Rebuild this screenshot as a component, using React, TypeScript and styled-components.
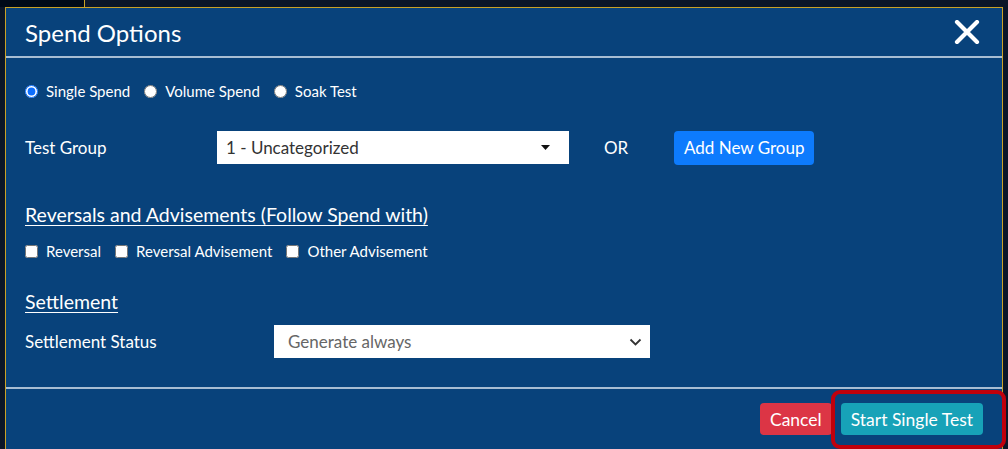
import styled, { createGlobalStyle } from "styled-components";

const GlobalStyle = createGlobalStyle`
  html, body {
    margin: 0;
    padding: 0;
    background: #0b1628;
    font-family: Lato, "Open Sans", Arial, sans-serif;
    overflow: hidden;
  }
`;

const RADIOS = ["Single Spend", "Volume Spend", "Soak Test"];
const CHECKS = ["Reversal", "Reversal Advisement", "Other Advisement"];

function CaretIcon() {
  return (
    <svg width="9" height="5" viewBox="0 0 9 5">
      <path d="M0 0 H9 L4.5 5 Z" fill="#111" />
    </svg>
  );
}

function ChevronIcon() {
  return (
    <svg width="13" height="8" viewBox="0 0 13 8">
      <path d="M1.5 1.5 L6.5 6.5 L11.5 1.5" fill="none" stroke="#333" strokeWidth="1.8" />
    </svg>
  );
}

function CloseIcon() {
  return (
    <svg width="26" height="24" viewBox="0 0 26 24">
      <path d="M3 2 L23 22 M23 2 L3 22" stroke="#fff" strokeWidth="4.2" strokeLinecap="round" />
    </svg>
  );
}

export default function App() {
  return (
    <>
      <GlobalStyle />
      <Page>
        <TopStrip>
          <BackdropTab />
        </TopStrip>
        <Modal>
          <Header>
            <Title>Spend Options</Title>
            <CloseButton aria-label="close">
              <CloseIcon />
            </CloseButton>
          </Header>
          <Body>
            <OptionRow>
              {RADIOS.map((label, i) => (
                <Option key={label}>
                  <Radio type="radio" name="spend" defaultChecked={i === 0} />
                  {label}
                </Option>
              ))}
            </OptionRow>

            <FieldRow $gap={29}>
              <Label $width={192}>Test Group</Label>
              <SelectBox $width={352}>
                <span>1 - Uncategorized</span>
                <CaretIcon />
              </SelectBox>
              <OrText>OR</OrText>
              <PrimaryButton>Add New Group</PrimaryButton>
            </FieldRow>

            <SectionTitle $gap={38}>Reversals and Advisements (Follow Spend with)</SectionTitle>
            <OptionRow $gap={14}>
              {CHECKS.map((label) => (
                <Option key={label}>
                  <Check type="checkbox" />
                  {label}
                </Option>
              ))}
            </OptionRow>

            <SectionTitle $gap={29}>Settlement</SectionTitle>
            <FieldRow $gap={10}>
              <Label $width={249}>Settlement Status</Label>
              <SelectBox $width={376} $muted>
                <span>Generate always</span>
                <ChevronIcon />
              </SelectBox>
            </FieldRow>
          </Body>
          <Footer>
            <ActionButton $color="#dc3545">Cancel</ActionButton>
            <Highlighted>
              <ActionButton $color="#17a2b8">Start Single Test</ActionButton>
              <HighlightRing />
            </Highlighted>
          </Footer>
        </Modal>
      </Page>
    </>
  );
}

const Page = styled.div`
  width: 1008px;
  height: 449px;
  overflow: hidden;
  background: #0b1628;
`;

const TopStrip = styled.div`
  height: 7px;
  display: flex;
`;

const BackdropTab = styled.div`
  width: 84px;
  height: 7px;
  background: #000a18;
  border-right: 1px solid #c9a227;
`;

const Modal = styled.div`
  margin-left: 5px;
  width: 996px;
  border: 1px solid #c9a227;
  border-bottom: none;
  background: #08427b;
  color: #fff;
`;

const Header = styled.div`
  height: 48px;
  display: flex;
  align-items: center;
  justify-content: space-between;
  padding: 0 22px 0 19px;
  border-bottom: 2px solid #a7bdd3;
`;

const Title = styled.h1`
  margin: 0;
  font-size: 24px;
  font-weight: 400;
`;

const CloseButton = styled.button`
  background: none;
  border: none;
  padding: 0;
  display: flex;
  cursor: pointer;
`;

const Body = styled.div`
  display: flex;
  flex-direction: column;
  padding: 23px 19px 28px;
`;

const OptionRow = styled.div<{ $gap?: number }>`
  display: flex;
  align-items: center;
  gap: 14px;
  height: 20px;
  margin-top: ${(p) => p.$gap ?? 0}px;
`;

const Option = styled.label`
  display: flex;
  align-items: center;
  gap: 8px;
  font-size: 15px;
`;

const Radio = styled.input`
  width: 13px;
  height: 13px;
  margin: 0;
  accent-color: #0d6efd;
`;

const Check = styled.input`
  width: 13px;
  height: 13px;
  margin: 0;
`;

const FieldRow = styled.div<{ $gap: number }>`
  display: flex;
  align-items: center;
  height: 35px;
  margin-top: ${(p) => p.$gap}px;
`;

const Label = styled.div<{ $width: number }>`
  width: ${(p) => p.$width}px;
  font-size: 17px;
`;

const SelectBox = styled.div<{ $width: number; $muted?: boolean }>`
  width: ${(p) => p.$width}px;
  height: 33px;
  box-sizing: border-box;
  background: #fff;
  display: flex;
  align-items: center;
  justify-content: space-between;
  padding: 0 ${(p) => (p.$muted ? 8 : 19)}px 0 ${(p) => (p.$muted ? 14 : 9)}px;
  font-size: 17px;
  color: ${(p) => (p.$muted ? "#666" : "#333")};
`;

const OrText = styled.div`
  margin-left: 35px;
  width: 70px;
  font-size: 17px;
`;

const PrimaryButton = styled.button`
  height: 34px;
  padding: 0 10px;
  border: none;
  border-radius: 4px;
  background: #0d7bfd;
  color: #fff;
  font-family: inherit;
  font-size: 17px;
`;

const SectionTitle = styled.h2<{ $gap: number }>`
  margin: ${(p) => p.$gap}px 0 0;
  line-height: 24px;
  font-size: 19.5px;
  font-weight: 400;
  text-decoration: underline;
  text-decoration-thickness: 1px;
  text-underline-offset: 3px;
`;

const Footer = styled.div`
  display: flex;
  justify-content: flex-end;
  gap: 9px;
  padding: 14px 19px 20px;
  border-top: 2px solid #a7bdd3;
`;

const ActionButton = styled.button<{ $color: string }>`
  height: 32px;
  padding: 0 10px;
  border: none;
  border-radius: 4px;
  background: ${(p) => p.$color};
  color: #fff;
  font-family: inherit;
  font-size: 17.5px;
`;

const Highlighted = styled.div`
  position: relative;
  display: flex;
`;

const HighlightRing = styled.div`
  position: absolute;
  top: -13px;
  bottom: -14px;
  left: -10px;
  right: -23px;
  border: 4px solid #c0000c;
  border-radius: 9px;
  pointer-events: none;
`;
